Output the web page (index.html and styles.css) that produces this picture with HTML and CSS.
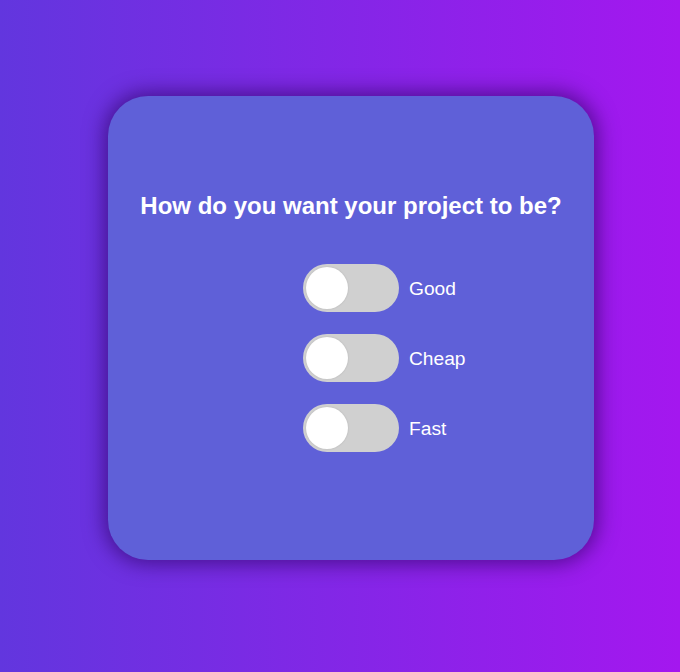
FILE: index.html
```html
<!DOCTYPE html>
<html lang="en">
<head>
<meta charset="utf-8">
<title>Good Cheap Fast</title>
<link rel="stylesheet" href="styles.css">
</head>
<body>
<main class="stage">
  <section class="card">
    <h2 class="title">How do you want your project to be?</h2>
    <div class="options">
      <label class="option">
        <span class="switch"><span class="knob"></span></span>
        <span class="label">Good</span>
      </label>
      <label class="option">
        <span class="switch"><span class="knob"></span></span>
        <span class="label">Cheap</span>
      </label>
      <label class="option">
        <span class="switch"><span class="knob"></span></span>
        <span class="label">Fast</span>
      </label>
    </div>
  </section>
</main>
</body>
</html>
```
FILE: styles.css
```css
html, body {
  margin: 0;
  padding: 0;
  height: 100%;
}
body {
  background: linear-gradient(90deg, #6236de 0%, #a417ef 100%);
  font-family: "Liberation Sans", Arial, sans-serif;
  color: #fff;
}
.stage {
  display: flex;
  justify-content: center;
  padding-top: 96px;
  padding-left: 22px;
}
.card {
  box-sizing: border-box;
  width: 486px;
  height: 464px;
  border-radius: 40px;
  background: #5f60d8;
  box-shadow: 0 0 20px 4px rgba(40, 0, 90, 0.6);
  padding-top: 96px;
  display: flex;
  flex-direction: column;
  align-items: center;
}
.title {
  margin: 0;
  font-size: 24px;
  line-height: 28px;
  font-weight: 700;
  text-align: center;
}
.options {
  margin-top: 44px;
  display: flex;
  flex-direction: column;
  align-items: center;
  gap: 22px;
}
.option {
  width: 96px;
  display: flex;
  align-items: center;
  gap: 10px;
}
.switch {
  flex: none;
  position: relative;
  width: 96px;
  height: 48px;
  border-radius: 24px;
  background: #d0d0d0;
}
.knob {
  position: absolute;
  left: 3px;
  top: 3px;
  width: 42px;
  height: 42px;
  border-radius: 50%;
  background: #fff;
  box-shadow: 0 0 2px rgba(0, 0, 0, 0.15);
}
.label {
  font-size: 19.2px;
  white-space: nowrap;
  padding-top: 2px;
}
```
